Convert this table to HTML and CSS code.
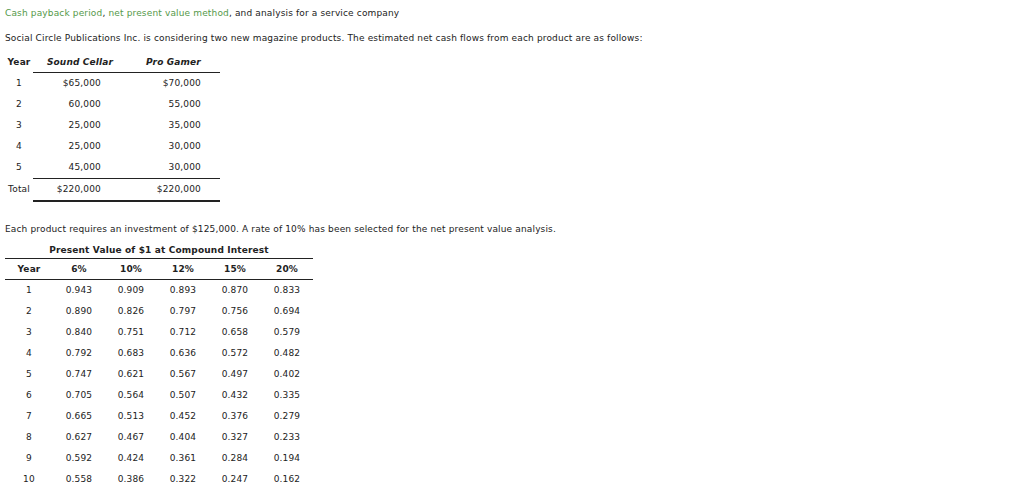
FILE: index.html
```html
<!DOCTYPE html>
<html>
<head>
<meta charset="utf-8">
<link rel="stylesheet" href="styles.css">
</head>
<body>
<div class="page">
  <p class="title"><span class="link">Cash payback period</span>, <span class="link">net present value method</span>, and analysis for a service company</p>
  <p class="para">Social Circle Publications Inc. is considering two new magazine products. The estimated net cash flows from each product are as follows:</p>
  <table class="cash">
    <thead>
      <tr>
        <th class="c-year">Year</th>
        <th class="c-a head-i">Sound Cellar</th>
        <th class="c-b head-i">Pro Gamer</th>
      </tr>
    </thead>
    <tbody>
      <tr><td class="c-year">1</td><td class="c-a">$65,000</td><td class="c-b">$70,000</td></tr>
      <tr><td class="c-year">2</td><td class="c-a">60,000</td><td class="c-b">55,000</td></tr>
      <tr><td class="c-year">3</td><td class="c-a">25,000</td><td class="c-b">35,000</td></tr>
      <tr><td class="c-year">4</td><td class="c-a">25,000</td><td class="c-b">30,000</td></tr>
      <tr><td class="c-year">5</td><td class="c-a">45,000</td><td class="c-b">30,000</td></tr>
      <tr class="total"><td class="c-year">Total</td><td class="c-a">$220,000</td><td class="c-b">$220,000</td></tr>
    </tbody>
  </table>
  <p class="para2">Each product requires an investment of $125,000. A rate of 10% has been selected for the net present value analysis.</p>
  <table class="pv">
    <thead>
      <tr><th class="pv-cap" colspan="6">Present Value of $1 at Compound Interest</th></tr>
      <tr class="pv-head"><th class="pv-year">Year</th><th>6%</th><th>10%</th><th>12%</th><th>15%</th><th>20%</th></tr>
    </thead>
    <tbody>
      <tr><td>1</td><td>0.943</td><td>0.909</td><td>0.893</td><td>0.870</td><td>0.833</td></tr>
      <tr><td>2</td><td>0.890</td><td>0.826</td><td>0.797</td><td>0.756</td><td>0.694</td></tr>
      <tr><td>3</td><td>0.840</td><td>0.751</td><td>0.712</td><td>0.658</td><td>0.579</td></tr>
      <tr><td>4</td><td>0.792</td><td>0.683</td><td>0.636</td><td>0.572</td><td>0.482</td></tr>
      <tr><td>5</td><td>0.747</td><td>0.621</td><td>0.567</td><td>0.497</td><td>0.402</td></tr>
      <tr><td>6</td><td>0.705</td><td>0.564</td><td>0.507</td><td>0.432</td><td>0.335</td></tr>
      <tr><td>7</td><td>0.665</td><td>0.513</td><td>0.452</td><td>0.376</td><td>0.279</td></tr>
      <tr><td>8</td><td>0.627</td><td>0.467</td><td>0.404</td><td>0.327</td><td>0.233</td></tr>
      <tr><td>9</td><td>0.592</td><td>0.424</td><td>0.361</td><td>0.284</td><td>0.194</td></tr>
      <tr><td>10</td><td>0.558</td><td>0.386</td><td>0.322</td><td>0.247</td><td>0.162</td></tr>
    </tbody>
  </table>
</div>
</body>
</html>
```

FILE: styles.css
```css
html, body {
  margin: 0;
  padding: 0;
  background: #ffffff;
}

.page {
  padding: 0 5px;
  font-family: "DejaVu Sans", Verdana, sans-serif;
  font-size: 9px;
  letter-spacing: 0.15px;
  line-height: 12px;
  color: #222222;
}

.title {
  margin: 7px 0 0 0;
}

.link {
  color: #55994a;
}

.para {
  margin: 13px 0 0 0;
}

.cash {
  margin-top: 8px;
  border-collapse: collapse;
  border-spacing: 0;
}

.cash th,
.cash td {
  padding: 0;
  height: 20px;
  line-height: 20px;
  white-space: nowrap;
}

.cash th {
  font-weight: bold;
}

.head-i {
  font-style: italic;
}

.cash thead th.c-a,
.cash thead th.c-b {
  border-bottom: 1px solid #222;
  text-align: center;
}

.cash tbody td {
  height: 21px;
  line-height: 21px;
}

.c-year {
  width: 28px;
  text-align: center;
}

.c-a {
  width: 94px;
}

.c-b {
  width: 93px;
}

.cash td.c-a {
  text-align: right;
  padding-right: 26px;
  width: 68px;
}

.cash td.c-b {
  text-align: right;
  padding-right: 19px;
  width: 74px;
}

.cash tr.total td.c-a,
.cash tr.total td.c-b {
  border-top: 1px solid #222;
  border-bottom: 2px solid #222;
}

.para2 {
  margin: 21px 0 0 0;
}

.pv {
  margin-top: 7px;
  border-collapse: collapse;
  border-spacing: 0;
}

.pv th,
.pv td {
  padding: 0;
  text-align: center;
  width: 52px;
  white-space: nowrap;
}

.pv th {
  font-weight: bold;
}

.pv th.pv-year,
.pv td:first-child {
  width: 48px;
}

.pv-cap {
  height: 16px;
  line-height: 16px;
  border-bottom: 1px solid #222;
}

.pv-head th {
  height: 20px;
  line-height: 20px;
  border-bottom: 1px solid #222;
}

.pv tbody td {
  height: 21px;
  line-height: 21px;
}
```
